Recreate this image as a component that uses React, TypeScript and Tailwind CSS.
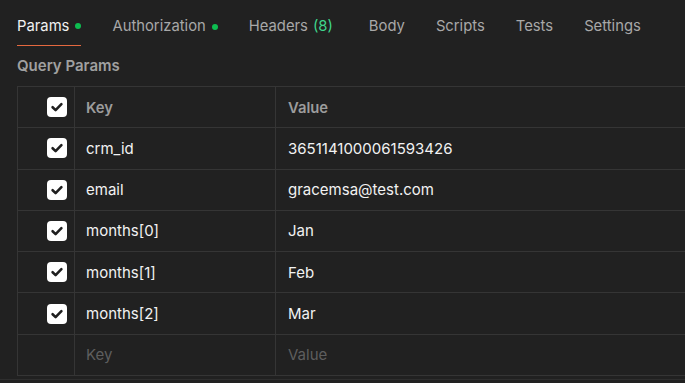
import React from "react";

const tabs = [
  { label: "Params", dot: true, active: true },
  { label: "Authorization", dot: true },
  { label: "Headers", count: "(8)" },
  { label: "Body" },
  { label: "Scripts" },
  { label: "Tests" },
  { label: "Settings" },
];

const rows = [
  { k: "crm_id", v: "3651141000061593426" },
  { k: "email", v: "gracemsa@test.com" },
  { k: "months[0]", v: "Jan" },
  { k: "months[1]", v: "Feb" },
  { k: "months[2]", v: "Mar" },
];

function Check() {
  return (
    <div className="w-[20px] h-[20px] rounded-[4px] bg-white flex items-center justify-center">
      <svg width="14" height="14" viewBox="0 0 14 14" fill="none">
        <path d="M2.6 7.2 L5.6 10.1 L11.4 4.2" stroke="#1f1f1f" strokeWidth="2.6" strokeLinecap="round" strokeLinejoin="round" />
      </svg>
    </div>
  );
}

export default function App() {
  return (
    <div
      className="w-[685px] h-[383px] overflow-hidden bg-[#212121] flex flex-col"
      style={{ fontFamily: "Inter, 'Noto Sans', sans-serif" }}
    >
      <div className="flex pl-[17px] gap-[31px] h-[46px] shrink-0">
        {tabs.map((t) => (
          <div key={t.label} className={`relative flex items-center pt-[7px] ${t.count ? "mr-[5px]" : ""} ${t.active ? "border-b border-[#e4683f]" : ""}`}>
            <span className={`text-[14.8px] ${t.active ? "text-[#f2f2f2]" : "text-[#a8a8a8]"}`}>{t.label}</span>
            {t.count && <span className="text-[14.8px] text-[#3fd68c] ml-[5px]">{t.count}</span>}
            {t.dot && <span className="ml-[6px] w-[6px] h-[6px] rounded-full bg-[#0dbd50]" />}
          </div>
        ))}
      </div>
      <div className="pl-[17px] h-[40px] flex items-center pt-[1px] shrink-0">
        <span className="text-[15px] font-semibold text-[#a0a0a0]">Query Params</span>
      </div>
      <div className="ml-[17px] w-[700px] border-t border-l border-[#353535] shrink-0">
        <div className="flex h-[41.3px] border-b border-[#353535]">
          <div className="w-[57px] border-r border-[#353535] flex items-center justify-end pr-[7px]">
            <Check />
          </div>
          <div className="w-[201px] border-r border-[#353535] flex items-center pl-[11px] pt-[1px]">
            <span className="text-[14.8px] font-semibold text-[#9c9c9c]">Key</span>
          </div>
          <div className="flex-1 flex items-center pl-[12px] pt-[1px]">
            <span className="text-[14.8px] font-semibold text-[#9c9c9c]">Value</span>
          </div>
        </div>
        {rows.map((r) => (
          <div key={r.k} className="flex h-[41.3px] border-b border-[#353535]">
            <div className="w-[57px] border-r border-[#353535] flex items-center justify-end pr-[7px]">
              <Check />
            </div>
            <div className="w-[201px] border-r border-[#353535] flex items-center pl-[11px] pt-[1px]">
              <span className="text-[15px] text-[#f2f2f2]">{r.k}</span>
            </div>
            <div className="flex-1 flex items-center pl-[12px] pt-[1px]">
              <span className="text-[15px] text-[#f2f2f2]">{r.v}</span>
            </div>
          </div>
        ))}
        <div className="flex h-[41.3px] border-b border-[#353535]">
          <div className="w-[57px] border-r border-[#353535]" />
          <div className="w-[201px] border-r border-[#353535] flex items-center pl-[11px] pt-[1px]">
            <span className="text-[15px] text-[#5e5e5e]">Key</span>
          </div>
          <div className="flex-1 flex items-center pl-[12px] pt-[1px]">
            <span className="text-[15px] text-[#5e5e5e]">Value</span>
          </div>
        </div>
      </div>
      <div className="mt-[3px] border-t border-[#2e2e2e]" />
    </div>
  );
}
